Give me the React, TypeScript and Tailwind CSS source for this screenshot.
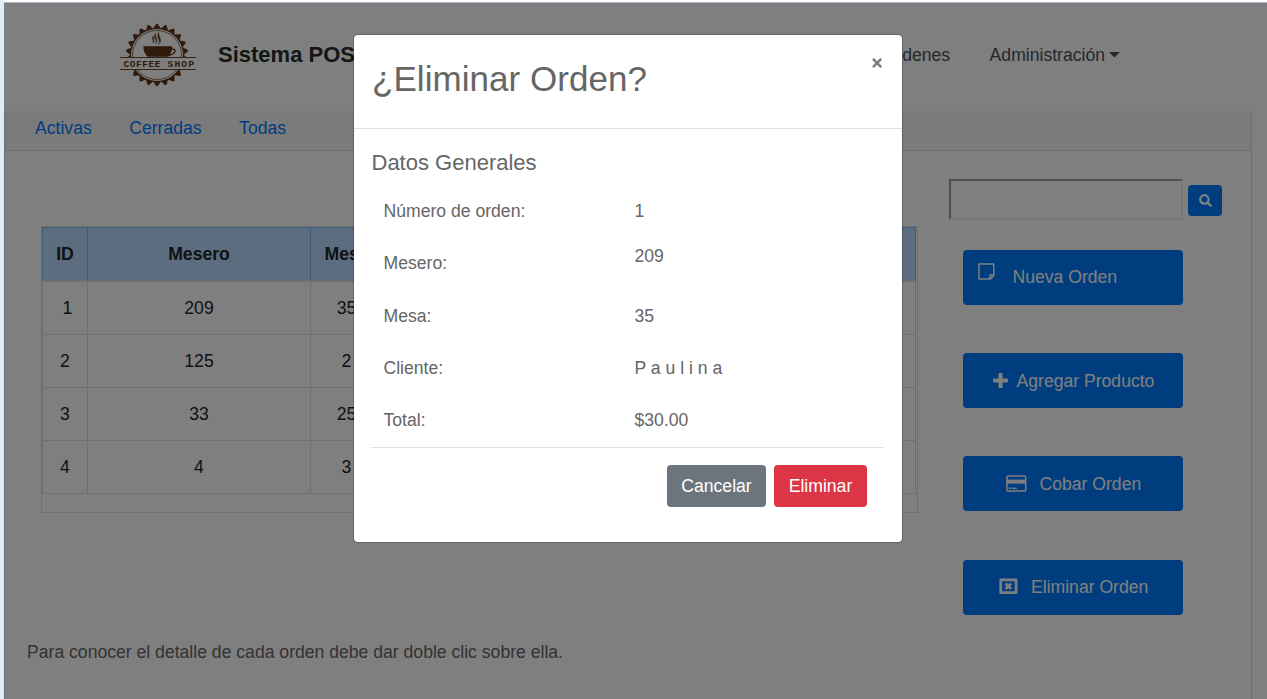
import React from "react";

const teeth = Array.from({ length: 22 }, (_, i) => (i * 360) / 22);

function Logo() {
  return (
    <svg width="78" height="64" viewBox="0 0 78 64" className="shrink-0" fill="#5c3214">
      {teeth.map((a) => (
        <path key={a} d="M33.400 5.600 L36.200 1.300 Q37 .4 37.800 1.300 L40.600 5.600 Q37 4.600 33.400 5.600Z" transform={`rotate(${a} 37 32)`} stroke="#5c3214" strokeWidth="0.400" />
      ))}
      <circle cx="37" cy="32" r="26.500" fill="none" stroke="#5c3214" strokeWidth="1.100" />
      <circle cx="37" cy="32" r="24.500" fill="none" stroke="#5c3214" strokeWidth="0.700" />
      <rect x="0" y="34" width="78" height="12" fill="#fff" />
      <path d="M23.300 23.300h28.900c.4 3.800-1.600 7.900-4 10.400H27.500c-2.600-2.400-4.300-6.600-4.200-10.400z" />
      <path d="M51.300 26.200c5-1 5.700 4-2.300 6.300" fill="none" stroke="#5c3214" strokeWidth="1.300" />
      <path d="M36 10.200c-5 5 3 6-.8 10.500 4.600-4-1.600-6.500.8-10.500zM39 9.500c-4.500 5 3.500 7-.8 12 5.600-5-.8-7.500.8-12zM33.200 13c-2.500 3 1.500 4-.5 7 3.200-3-.7-4.500.5-7z" stroke="#5c3214" strokeWidth="0.500" />
      <rect x="0" y="34" width="76" height="0.900" />
      <rect x="0" y="46" width="76" height="0.900" />
      <text x="3.500" y="43.700" fontFamily="Liberation Mono, monospace" fontWeight="bold" fontSize="9.600" textLength="37" lengthAdjust="spacing">COFFEE</text>
      <text x="47.500" y="43.700" fontFamily="Liberation Mono, monospace" fontWeight="bold" fontSize="9.600" textLength="26.500" lengthAdjust="spacing">SHOP</text>
    </svg>
  );
}

function SearchIcon() {
  return (
    <svg width="13" height="13" viewBox="0 0 13 13" fill="none" stroke="#fff">
      <circle cx="5.400" cy="5.400" r="4.200" strokeWidth="2.200" />
      <path d="M8.600 8.600l3 3" strokeWidth="2.400" strokeLinecap="round" />
    </svg>
  );
}

function NoteIcon() {
  return (
    <svg width="17" height="17" viewBox="0 0 17 17" fill="none" stroke="#fff" strokeWidth="1.500" strokeLinejoin="round">
      <path d="M1.500.9h13.700a.6.600 0 0 1 .6.600v10.900l-3.500 3.500H1.500a.6.600 0 0 1-.6-.6V1.500a.6.600 0 0 1 .6-.6z" />
      <path d="M12 15.600v-3.500h3.500" />
    </svg>
  );
}

function PlusIcon() {
  return (
    <svg width="15" height="15" viewBox="0 0 15 15" fill="#fff">
      <rect x="5.500" width="4" height="15" rx="0.800" />
      <rect y="5.500" width="15" height="4" rx="0.800" />
    </svg>
  );
}

function CardIcon() {
  return (
    <svg width="21" height="17" viewBox="0 0 21 17" fill="#fff">
      <rect x="0.900" y="0.900" width="18.800" height="15.200" rx="1.200" fill="none" stroke="#fff" strokeWidth="1.500" />
      <rect x="1" y="4.600" width="18.500" height="4" />
      <rect x="2.700" y="12.500" width="2.700" height="1.500" />
      <rect x="6.600" y="12.500" width="4.200" height="1.500" />
    </svg>
  );
}

function CloseBoxIcon() {
  return (
    <svg width="19" height="17" viewBox="0 0 19 17" fill="none" stroke="#fff">
      <path d="M1.700 1.900h15.400v12.800H1.700z" strokeWidth="2.700" strokeLinejoin="round" />
      <path d="M6.500 5.500l5.600 5.600M12.100 5.500l-5.600 5.600" strokeWidth="2.800" />
    </svg>
  );
}

const rows = [
  ["1", "209", "35"],
  ["2", "125", "2"],
  ["3", "33", "25"],
  ["4", "4", "3"],
];

function OrdersTable() {
  return (
    <div className="ml-[36px] mt-[75px] h-[287px] w-[877px] shrink-0 border border-[#dfdfdf] text-center text-[#212529]">
      <div className="grid h-[53px] w-[874px] grid-cols-[45px_223px_72px_1fr] border-r border-t border-[#7abaff] bg-[#b8daff] font-bold leading-[52px]">
        <div className="border-l border-[#7abaff]">ID</div>
        <div className="border-l border-[#7abaff]">Mesero</div>
        <div className="border-l border-[#7abaff]">Mesa</div>
        <div className="border-l border-[#7abaff]" />
      </div>
      <div className="h-[2px] w-[874px] bg-[#dfdfdf]" />
      {rows.map((r) => (
        <div key={r[0]} className="grid h-[53px] w-[874px] grid-cols-[45px_223px_72px_1fr] border-b border-r border-[#dfdfdf] leading-[52px]">
          <div className={r[0] === "1" ? "border-l border-[#dfdfdf] pl-[5px]" : "border-l border-[#dfdfdf]"}>{r[0]}</div>
          <div className="border-l border-[#dfdfdf]">{r[1]}</div>
          <div className="border-l border-[#dfdfdf]">{r[2]}</div>
          <div className="border-l border-[#dfdfdf]" />
        </div>
      ))}
    </div>
  );
}

const action = "flex h-[55px] w-[220px] items-center rounded-[4px] bg-[#007bff] text-white";

function Page() {
  return (
    <div className="flex h-full flex-col bg-white">
      <header className="flex h-[108px] shrink-0 items-start pl-[116px] text-[#495057]">
        <div className="pt-[20px]"><Logo /></div>
        <div className="ml-[20px] mt-[35px] w-[630px] whitespace-nowrap text-[22px] font-bold leading-[34px] text-[#292b2c]">Sistema POS</div>
        <nav className="ml-auto mr-[147px] mt-[39px] flex gap-[39.500px] leading-[27px]">
          <span>Órdenes</span>
          <span className="flex items-center">
            Administración
            <svg width="11" height="6" viewBox="0 0 11 6" className="-mt-[2px] ml-[4px]" fill="#495057"><path d="M0 0h11L5.500 5.500z" /></svg>
          </span>
        </nav>
      </header>
      <main className="flex w-[1248px] grow flex-col border-x border-[#dfdfdf]">
        <nav className="flex h-[40px] shrink-0 gap-[37.500px] border-b border-[#dfdfdf] bg-[#f7f7f7] pl-[30px] leading-[34px] text-[#007bff]">
          <span>Activas</span>
          <span>Cerradas</span>
          <span>Todas</span>
        </nav>
        <div className="flex h-[488px] shrink-0">
          <OrdersTable />
          <aside className="ml-[31px] flex flex-col pt-[28px]">
            <div className="flex items-start gap-[5px]">
              <input className="h-[41px] w-[234px] border-2 border-b-[#eee] border-l-[#9c9c9c] border-r-[#eee] border-t-[#9c9c9c] bg-white" />
              <button className="mt-[6px] flex h-[31px] w-[34px] items-center justify-center rounded-[4px] bg-[#007bff]"><SearchIcon /></button>
            </div>
            <div className="ml-[14px] mt-[30px] flex flex-col">
              <button className={action}><span className="mb-[12px] ml-[14.500px]"><NoteIcon /></span><span className="ml-[18px]">Nueva Orden</span></button>
              <button className={`${action} mt-[48px]`}><span className="ml-[30px]"><PlusIcon /></span><span className="ml-[8.500px] mt-px">Agregar Producto</span></button>
              <button className={`${action} mt-[48px]`}><span className="ml-[42.500px]"><CardIcon /></span><span className="ml-[13px] mt-px">Cobar Orden</span></button>
              <button className={`${action} mt-[49px]`}><span className="mb-[2px] ml-[36px]"><CloseBoxIcon /></span><span className="ml-[13px]">Eliminar Orden</span></button>
            </div>
          </aside>
        </div>
        <p className="ml-[22px] leading-[27px] text-[#666]">Para conocer el detalle de cada orden debe dar doble clic sobre ella.</p>
      </main>
    </div>
  );
}

const details = [
  ["Número de orden:", "1"],
  ["Mesero:", "209"],
  ["Mesa:", "35"],
  ["Cliente:", "P a u l i n a"],
  ["Total:", "$30.00"],
];

function DeleteDialog() {
  return (
    <div className="absolute inset-0 flex items-start bg-black/50 pl-[349px] pt-[31px]">
      <section role="dialog" className="flex h-[509px] w-[550px] flex-col rounded-[5px] border border-black/20 bg-white bg-clip-padding text-[#666]">
        <div className="flex h-[94px] shrink-0 items-start justify-between border-b border-[#dee2e6] pl-[18px] pr-[19px]">
          <h1 className="mt-[22px] text-[35px] leading-[43px] tracking-[0.050px]">¿Eliminar Orden?</h1>
          <button aria-label="Cerrar" className="mt-[23px]">
            <svg width="12" height="10" viewBox="0 0 12 10" stroke="#7f7f7f" strokeWidth="2.600"><path d="M2 .9l8.200 8.200M10.200.9L2 9.100" /></svg>
          </button>
        </div>
        <div className="flex flex-col pl-[17px] pr-[18px]">
          <h2 className="ml-[0.500px] mt-[20px] text-[22px] leading-[27px]">Datos Generales</h2>
          <div className="mt-[9px] h-[262px] pl-[12.500px]">
            {details.map(([label, value], i) => (
              <div key={label} className={i === 2 || i === 3 ? "flex h-[52.250px] items-center pt-[1px]" : "flex h-[52.250px] items-center"}>
                <span className="w-[251px]">{label}</span>
                <span className={label === "Mesero:" ? "mb-[14px]" : ""}>{value}</span>
              </div>
            ))}
          </div>
          <div className="flex justify-end gap-[8px] border-t border-[#dfdfdf] pr-[17px] pt-[17px] text-white">
            <button className="h-[42px] w-[99px] rounded-[4px] bg-[#6c757d]">Cancelar</button>
            <button className="h-[42px] w-[93px] rounded-[4px] bg-[#dc3545]">Eliminar</button>
          </div>
        </div>
      </section>
    </div>
  );
}

export default function App() {
  return (
    <div className="h-[699px] w-[1267px] overflow-hidden border-l-4 border-[#e1ebf4] bg-white pt-[2px] font-['Liberation_Sans',Arial,sans-serif] text-[17.600px]">
      <div className="h-px bg-[#a5b6c9]" />
      <div className="relative h-[696px]">
        <Page />
        <DeleteDialog />
      </div>
    </div>
  );
}
